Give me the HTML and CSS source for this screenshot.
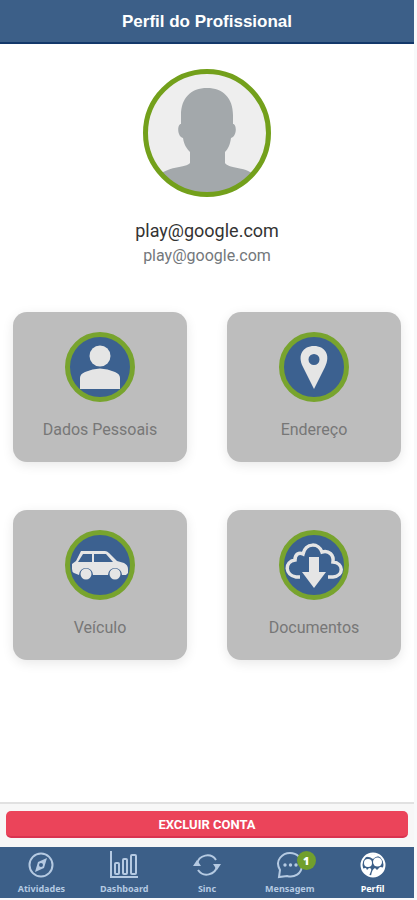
FILE: index.html
```html
<!DOCTYPE html>
<html lang="pt-BR">
<head>
<meta charset="utf-8">
<meta name="viewport" content="width=device-width, initial-scale=1">
<title>Perfil do Profissional</title>
<link rel="stylesheet" href="styles.css">
</head>
<body>
<div class="app">
  <header class="topbar"><h1>Perfil do Profissional</h1></header>
  <main class="content">
    <section class="profile">
      <svg class="avatar" viewBox="0 0 128 128" aria-hidden="true">
        <defs><clipPath id="face"><circle cx="64" cy="64" r="61"/></clipPath></defs>
        <circle cx="64" cy="64" r="62" fill="#eeeeee"/>
        <path clip-path="url(#face)" fill="#a3a8ab" d="M64 19C48 19 38 29 38 46V55C34 55 34 68 40 69C41 76 44 80 47 83V94C44 99 22 97 15 108V128H113V108C105 97 85 100 82 94V83C85 80 87 76 88 69C94 68 94 55 90 55V46C90 29 80 19 64 19Z"/>
        <circle cx="64" cy="64" r="61.500" fill="none" stroke="#73a01b" stroke-width="5"/>
      </svg>
      <p class="name">play@google.com</p>
      <p class="email">play@google.com</p>
    </section>
    <nav class="cards" aria-label="Dados do perfil">
      <a class="card" href="#dados">
        <svg class="badge-icon" viewBox="0 0 70 70" aria-hidden="true">
          <circle cx="35" cy="35" r="32.500" fill="#3c6190" stroke="#78a42e" stroke-width="5"/>
          <circle cx="35" cy="24" r="10.500" fill="#e5e5e5"/>
          <path fill="#e5e5e5" d="M15 57V46Q15 42 20 40Q35 33 50 40Q55 42 55 46V57Z"/>
        </svg>
        <span>Dados Pessoais</span>
      </a>
      <a class="card" href="#endereco">
        <svg class="badge-icon" viewBox="0 0 70 70" aria-hidden="true">
          <circle cx="35" cy="35" r="32.500" fill="#3c6190" stroke="#78a42e" stroke-width="5"/>
          <path fill="#e5e5e5" fill-rule="evenodd" d="M35 57L24 35C18 23 24 14 35 14S52 23 46 35ZM35 22A5.500 5.500 0 1 0 35 33A5.500 5.500 0 0 0 35 22Z"/>
        </svg>
        <span>Endereço</span>
      </a>
      <a class="card" href="#veiculo">
        <svg class="badge-icon" viewBox="0 0 70 70" aria-hidden="true">
          <circle cx="35" cy="35" r="32.500" fill="#3c6190" stroke="#78a42e" stroke-width="5"/>
          <path fill="#e5e5e5" fill-rule="evenodd" d="M16 21H40Q42 21 44 23L52 31L59 33Q63 35 63 39V43L61 45H57A7 7 0 0 0 43 45H28A7 7 0 0 0 14 45L9 43Q7 42 7 39V34L11 31ZM18 24L13 32H27V24ZM29 24V32H48L41 24Z"/>
          <circle cx="21" cy="44" r="5.500" fill="#e5e5e5"/>
          <circle cx="50" cy="44" r="5.500" fill="#e5e5e5"/>
        </svg>
        <span>Veículo</span>
      </a>
      <a class="card" href="#documentos">
        <svg class="badge-icon" viewBox="0 0 70 70" aria-hidden="true">
          <circle cx="35" cy="35" r="32.500" fill="#3c6190" stroke="#78a42e" stroke-width="5"/>
          <path fill="none" stroke="#e5e5e5" stroke-width="3.500" d="M21 47H17C6 45 5 32 16 30C16 24 20 22 24 24C27 12 40 13 43 22C50 20 55 25 54 32C65 33 65 46 54 47H49"/>
          <path fill="#e5e5e5" d="M30 27H40V42H47L35 58L23 42H30Z"/>
        </svg>
        <span>Documentos</span>
      </a>
    </nav>
  </main>
  <div class="action"><button class="delete" type="button">EXCLUIR CONTA</button></div>
  <nav class="tabs" aria-label="Principal">
    <a class="tab" href="#atividades">
      <svg viewBox="0 0 28 28" aria-hidden="true"><circle cx="14" cy="14" r="11.500"/><path fill="currentColor" fill-rule="evenodd" stroke="none" d="M20 7L17 17L8 21L11 11ZM14 12A2 2 0 1 0 14 16A2 2 0 0 0 14 12Z"/></svg>
      <span>Atividades</span>
    </a>
    <a class="tab" href="#dashboard">
      <svg viewBox="0 0 28 28" aria-hidden="true"><path d="M1 0V26H28"/><rect x="5" y="12" width="4" height="11" rx="1"/><rect x="13" y="8" width="4" height="15" rx="1"/><rect x="21" y="4" width="5" height="19" rx="1"/></svg>
      <span>Dashboard</span>
    </a>
    <a class="tab" href="#sinc">
      <svg viewBox="0 0 28 28" aria-hidden="true"><path d="M4 13A10.500 10.500 0 0 1 23 9M24 15A10.500 10.500 0 0 1 5 19"/><path fill="currentColor" stroke="none" d="M0 15L4 9L8 15ZM20 13H28L24 19Z"/></svg>
      <span>Sinc</span>
    </a>
    <a class="tab" href="#mensagem">
      <span class="icon-wrap">
        <svg viewBox="0 0 28 28" aria-hidden="true"><path d="M3 26L4 19C-2 9 7 2 14 2C21 2 26 7 26 14C26 23 18 27 11 25Z"/><g fill="currentColor" stroke="none"><circle cx="9" cy="14" r="1.700"/><circle cx="14.500" cy="14" r="1.700"/><circle cx="20" cy="14" r="1.700"/></g></svg>
        <b class="count">1</b>
      </span>
      <span>Mensagem</span>
    </a>
    <a class="tab active" href="#perfil" aria-current="page">
      <svg viewBox="0 0 28 28" aria-hidden="true"><circle cx="14" cy="14" r="11.500"/><g fill="currentColor" stroke="none"><circle cx="9" cy="12" r="4"/><circle cx="18.500" cy="11" r="4.500"/><path d="M3 18Q5 17 7 17L8 19L10 17Q13 17 12 20L10 25Q5 23 3 18ZM12 25Q13 18 16 17L18 19L21 16Q25 16 25 18Q21 26 12 25ZM6 6Q14 0 22 6Q18 4 14 8Q10 5 6 6Z"/></g></svg>
      <span>Perfil</span>
    </a>
  </nav>
</div>
</body>
</html>
```
FILE: styles.css
```css
* { box-sizing: border-box; }
body {
  margin: 0;
  background: #f8f9fa;
  font-family: Roboto, "Liberation Sans", sans-serif;
}
.app {
  min-height: 100vh;
  margin-right: 3px;
  padding-bottom: 2px;
  display: flex;
  flex-direction: column;
}
.topbar {
  padding: 11px 0 9px;
  background: #3c5f88;
  border-bottom: 2px solid #14386a;
  color: #ffffff;
  text-align: center;
}
h1 {
  margin: 0;
  font: bold 17px/22px "Liberation Sans", Arial, sans-serif;
}
.content {
  flex: 1;
  padding: 25px 13px 0;
  background: #ffffff;
}
.profile { text-align: center; }
.avatar {
  display: block;
  width: 128px;
  margin: 0 auto 21px;
}
.profile p { margin: 0; }
.profile .name {
  color: #333333;
  font-size: 18px;
  line-height: 26px;
}
.profile .email {
  color: #73777b;
  font-size: 16px;
  line-height: 24px;
}
.cards {
  display: grid;
  grid-template-columns: 1fr 1fr;
  gap: 48px 40px;
  margin-top: 44px;
}
.card {
  display: flex;
  flex-direction: column;
  align-items: center;
  gap: 17px;
  padding: 20px 0 21px;
  border-radius: 14px;
  background: #bdbdbd;
  box-shadow: 0 3px 12px #00000018;
  color: #777777;
  font-size: 16px;
  line-height: 22px;
  text-decoration: none;
}
.badge-icon {
  display: block;
  width: 70px;
}
.action {
  padding: 7px 6px 9px;
  border-top: 2px solid #e1e1e1;
  background: #f7f7f7;
}
.delete {
  display: block;
  width: 100%;
  padding: 5px 0 3px;
  border: 0;
  border-bottom: 2px solid #d93350;
  border-radius: 5px;
  background: #eb445a;
  color: #ffffff;
  font: bold 13px/17px Roboto, sans-serif;
}
.tabs {
  display: flex;
  padding: 4px 0 3px;
  background: #3c5f88;
}
.tab {
  flex: 1;
  display: flex;
  flex-direction: column;
  align-items: center;
  gap: 4px;
  color: #b5cae2;
  font: bold 9px/12px "Noto Sans", sans-serif;
  text-decoration: none;
}
.tab.active { color: #ffffff; }
.tab svg {
  display: block;
  width: 28px;
  fill: none;
  stroke: currentColor;
  stroke-width: 2;
}
.icon-wrap { position: relative; }
.count {
  position: absolute;
  top: 0;
  right: -12px;
  width: 19px;
  border-radius: 10px;
  background: #719f2d;
  color: #ffffff;
  font-size: 11px;
  line-height: 19px;
  text-align: center;
}
```
